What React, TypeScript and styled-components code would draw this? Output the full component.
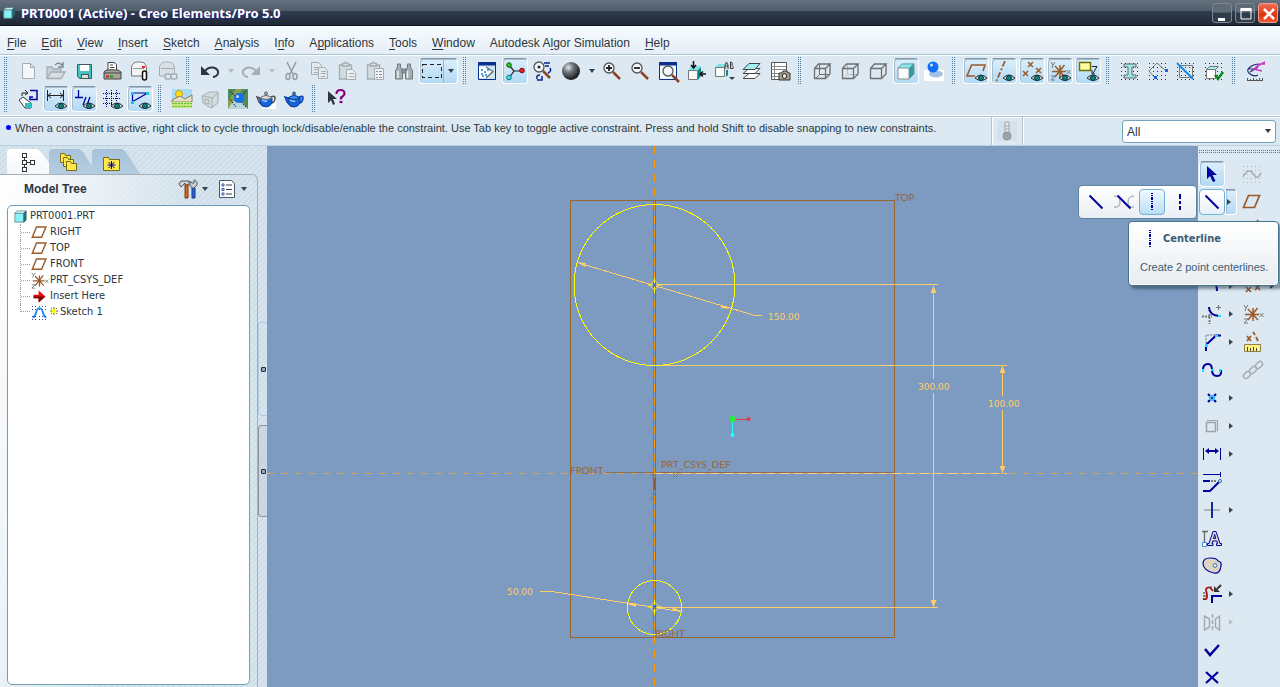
import React from 'react';
import styled, { createGlobalStyle, css } from 'styled-components';

const Global = createGlobalStyle`
  * { box-sizing: border-box; }
  html, body { margin: 0; height: 100%; }
  body { font: 12px "Liberation Sans", sans-serif; color: #2b3640; overflow: hidden; }
  button, select { font: inherit; color: inherit; }
  ul { list-style: none; margin: 0; padding: 0; }
`;

const ui = '"Liberation Sans", Arial, sans-serif';
const treeFont = '"DejaVu Sans Condensed", Tahoma, sans-serif';
const face = '#dce9f2';
const navy = '#00009c';
const brown = '#9a5a2a';
const off = '#a3adb3';

const Shell = styled.div`
  display: flex;
  flex-direction: column;
  height: 100vh;
  background: ${face};
`;

const TitleBar = styled.header`
  display: flex;
  align-items: center;
  flex: none;
  height: 26px;
  padding: 0 2px 0 2px;
  gap: 3px;
  background: linear-gradient(#65717e 0, #4f5c69 11px, #313e4e 11px, #1e2735 25px, #10161f 25px);
`;

const Title = styled.h1`
  flex: 1;
  margin: 0 0 0 2px;
  font: bold 13px/26px "Noto Sans", sans-serif;
  color: #fff;
  text-shadow: 1px 1px 0 #1c2a8c;
`;

const WinButton = styled.button<{ $close?: boolean }>`
  display: grid;
  place-items: center;
  width: 20px;
  height: 20px;
  padding: 0;
  border: 1px solid ${p => (p.$close ? '#f0a08c' : '#7d8893')};
  border-radius: 3px;
  background: ${p => (p.$close ? 'linear-gradient(#ef6f55, #e2320f 60%, #ef5a36)' : 'linear-gradient(#5f6b77 45%, #2f3c4b 50%)')};
`;

const MenuBar = styled.nav`
  display: flex;
  flex: none;
  gap: 15px;
  height: 28px;
  padding: 0 7px;
  line-height: 35px;
  background: linear-gradient(#f6fcff, #e6edf5);
`;

const MenuItem = styled.a`
  color: #2b3640;
  text-decoration: none;
  white-space: nowrap;
  u { text-underline-offset: 2px; }
`;

const Toolbars = styled.div`
  flex: none;
  padding: 2px 0 3px;
  border-top: 1px solid #a9c6d6;
  border-bottom: 1px solid #a9c6d6;
  box-shadow: inset 0 1px #fff, inset 0 -1px #fff, 0 1px #fff;
`;

const ToolRow = styled.div`
  display: flex;
  height: 28px;
`;

const Group = styled.div`
  display: flex;
  flex: none;
`;

const dots = css`
  background-image: conic-gradient(from 90deg at 1px 1px, transparent 180deg, #4f7d9c 180deg 270deg, transparent 270deg);
  background-size: 2px 2px;
`;

const Grip = styled.span`
  flex: none;
  width: 4px;
  height: 28px;
  margin: 0 6px 0 4px;
  ${dots}
`;

const pressedLook = css`
  border-color: #8395a2 #fff #fff #fff;
  background: linear-gradient(#dbeefb, #b3daf5);
  box-shadow: inset 1px 1px 0 #a4bdcf;
`;

const ToolButton = styled.button<{ $on?: boolean }>`
  display: grid;
  place-items: center;
  flex: none;
  width: 26px;
  height: 26px;
  margin: 1px;
  padding: 0;
  border: 1px solid transparent;
  border-radius: 4px;
  background: none;
  ${p => p.$on && pressedLook}
`;

const ArrowButton = styled.button<{ $dim?: boolean; $side?: boolean }>`
  flex: none;
  width: 13px;
  height: 28px;
  padding: 0;
  border: 0;
  background: none;
  &::before {
    content: '';
    display: block;
    margin: 0 auto;
    width: 0;
    border: 3px solid transparent;
    ${p => (p.$side
    ? css`border-left: 4px solid ${p.$dim ? '#b3bdc3' : '#36424c'}; border-right: 0; width: 4px;`
    : css`border-top: 4px solid ${p.$dim ? '#b3bdc3' : '#36424c'}; border-bottom: 0;`)}
  }
`;

const Combo = styled.div`
  display: flex;
  width: 39px;
  height: 26px;
  margin: 1px;
  border: 1px solid;
  border-radius: 4px;
  ${pressedLook}
  > button:first-child { flex: 1; padding: 0 0 0 1px; border: 0; border-right: 1px solid #8fbad6; background: none; display: grid; place-items: center; }
  > button:last-child { height: 24px; }
`;

const Glyph = styled.svg.attrs({ viewBox: '0 0 20 20', width: 20, height: 20, fill: 'none' })`
  display: block;
  overflow: visible;
`;

const MessageBar = styled.div`
  display: flex;
  flex: none;
  height: 29px;
  border-bottom: 1px solid #b9d0de;
`;

const Message = styled.p`
  display: flex;
  flex: 1;
  gap: 4px;
  margin: 0;
  padding: 4px 0 0 6px;
  font: 11px/14px ${ui};
  white-space: nowrap;
  &::before { content: ''; width: 5px; height: 5px; margin-top: 4px; border-radius: 3px; background: #00f; }
`;

const Thermo = styled.div`
  display: grid;
  place-items: center;
  width: 32px;
  margin-right: 99px;
  border: solid #b4c3cd;
  border-width: 0 1px;
  box-shadow: inset 1px 0 #fff, 1px 0 #fff;
`;

const FilterWrap = styled.label`
  position: relative;
  width: 154px;
  margin: 3px 4px 0 0;
  &::after {
    content: '';
    position: absolute;
    right: 5px;
    top: 9px;
    border: 3px solid transparent;
    border-top: 4px solid #2b3640;
    border-bottom: 0;
    pointer-events: none;
  }
`;

const Filter = styled.select`
  appearance: none;
  width: 100%;
  height: 23px;
  padding: 0 4px;
  border: 1px solid #73a3bb;
  border-radius: 3px;
  background: #fff;
`;

const Main = styled.main`
  display: flex;
  flex: 1;
  min-height: 0;
`;

const LeftPane = styled.aside`
  display: flex;
  flex: none;
  width: 267px;
  background: repeating-linear-gradient(135deg, #cfdfea 0 2px, #d8e5ee 2px 4px);
`;

const Navigator = styled.div`
  display: flex;
  flex-direction: column;
  width: 258px;
`;

const Tabs = styled.div`
  display: flex;
  height: 28px;
  padding: 3px 0 0 7px;
`;

const Tab = styled.button<{ $active?: boolean }>`
  width: ${p => (p.$active ? 50 : 48)}px;
  height: 25px;
  margin-right: ${p => (p.$active ? -8 : -5)}px;
  padding: 0 0 0 8px;
  border: 0;
  border-radius: 4px 0 0 0;
  background: ${p => (p.$active ? 'linear-gradient(#fff, #f3f7fa)' : 'linear-gradient(#a6c2da, #b4cde0)')};
  clip-path: polygon(0 0, 30px 0, 34px 3px, 100% 100%, 0 100%);
`;

const Sheet = styled.section`
  display: flex;
  flex-direction: column;
  flex: 1;
  min-height: 0;
  padding: 0 7px 2px;
  border: solid #a3b0b9;
  border-width: 1px 1px 0 0;
  border-radius: 0 6px 0 0;
  background: linear-gradient(100deg, #fff 0, #f2f6f9 60px, transparent 190px);
`;

const SheetHead = styled.div`
  display: flex;
  align-items: center;
  height: 30px;
  padding: 0 0 2px 17px;
  h2 { flex: 1; margin: 0; font: bold 12px/16px ${ui}; }
`;

const Tree = styled.ul`
  && { padding: 2px 5px; }
  flex: 1;
  width: 243px;
  border: 1px solid #6f9fb8;
  border-radius: 5px;
  background: #fff;
  font: 11px/16px ${treeFont};
`;

const TreeItem = styled.li<{ $child?: boolean; $last?: boolean }>`
  display: flex;
  align-items: center;
  gap: 2px;
  height: 16px;
  ${p => p.$child && css`
    margin-left: 7px;
    &::before {
      content: '';
      width: 10px;
      height: ${p.$last ? 8 : 16}px;
      align-self: flex-start;
      border-left: 1px dotted #9aa4ab;
      background: repeating-linear-gradient(90deg, #9aa4ab 0 1px, #fff 1px 2px) 0 ${p.$last ? '100%' : '8px'} / 100% 1px no-repeat;
    }
    gap: 0;
    svg { margin: 0 2px 0 0; }
  `}
`;

const Sash = styled.div`
  display: flex;
  flex-direction: column;
  gap: 9px;
  width: 9px;
  padding-top: 176px;
`;

const SashHandle = styled.button<{ $dark?: boolean }>`
  display: grid;
  place-items: center;
  height: ${p => (p.$dark ? 92 : 94)}px;
  padding: 0;
  border: 1px solid ${p => (p.$dark ? '#8b969e' : '#a9cbe4')};
  border-right: 0;
  border-radius: 4px 0 0 4px;
  background: ${p => (p.$dark ? 'rgba(190,205,214,.5)' : 'none')};
  &::before { content: ''; width: 3px; height: 3px; border: 1px solid #1e2a33; border-radius: 1px; background: #9ab; }
`;

const Viewport = styled.div`
  flex: 1;
  min-width: 0;
  background: #7d9bc0;
  svg { display: block; width: 100%; height: 100%; }
`;

const RightPane = styled.aside`
  position: relative;
  flex: none;
  width: 82px;
  padding-top: 4px;
`;

const SideGrip = styled.div`
  height: 4px;
  margin: 0 0 6px 1px;
  ${dots}
`;

const SideRow = styled.div`
  display: flex;
  height: 28px;
`;

const Cell = styled.div<{ $w: number }>`
  flex: none;
  width: ${p => p.$w}px;
`;

const SplitArrow = styled.div`
  width: 12px;
  height: 26px;
  margin: 1px 0 1px -1px;
  border: 1px solid;
  border-radius: 0 4px 4px 0;
  ${pressedLook}
  button { width: 10px; height: 24px; }
`;

const Flyout = styled.div`
  position: absolute;
  top: 39px;
  right: 83px;
  display: flex;
  padding: 2px 2px 2px 3px;
  border: 1px solid #5c87a3;
  border-radius: 4px;
  background: linear-gradient(#fff, #e9eff3);
`;

const FlyButton = styled(ToolButton)<{ $plain?: boolean }>`
  ${p => p.$on && css`
    border-color: #6fb2d9;
    box-shadow: none;
    background: ${p.$plain ? 'linear-gradient(#fff, #e8f1f8)' : 'linear-gradient(#f2faff, #b9def6)'};
  `}
`;

const Tip = styled.div`
  position: absolute;
  top: 75px;
  right: 1px;
  width: 151px;
  padding: 7px 11px 10px;
  border: 1px solid #44738c;
  border-radius: 4px;
  background: linear-gradient(#fff, #e8edf1);
  box-shadow: inset 0 0 0 1px #fff, 3px 3px 3px rgba(30, 50, 70, .5);
  color: #3a5d74;
  h3 { display: flex; align-items: center; gap: 3px; margin: 0 0 10px; height: 20px; font: bold 11px/20px "DejaVu Sans Condensed", sans-serif; }
  p { margin: 0; font: 11px/16px ${ui}; white-space: nowrap; }
`;

const Eye = () => (
  <g>
    <path d="M9 17q6-6 12 0q-6 5-12 0z" fill="#c9d6d8" stroke="#28343a" />
    <circle cx="15" cy="17" r="2.5" fill="#0a8583" stroke="#153238" />
  </g>
);
const Grid = ({ c = '#10269c' }: { c?: string }) => (
  <path d="M1.5 2V19M5.5 2V19M9.5 2V19M13.5 2V19M17.5 2V19" stroke={c} strokeDasharray="1 3" shapeRendering="crispEdges" />
);
const Cube = ({ full, back }: { full?: boolean; back?: string }) => (
  <g stroke="#6f6f6f" shapeRendering="auto">
    {full && <path d="M3.500 17.500l4-4M7.500 3.500v10h10.500" stroke={back} />}
    <path d="M2.500 7.500h11v10h-11zM2.500 7.500l4-4.500h11.500l-4.500 4.500M18 3v10l-4.500 4.500" strokeWidth="1.300" />
  </g>
);
const Tea = ({ half }: { half?: boolean }) => (
  <g>
    {half && <path d="M6 10h14v10H6z" fill="#fff" />}
    <path d="M4 9L1 8l2 5 3 3zM15 8q5-2 4 2t-4 4" stroke={half ? '#555' : '#1247b8'} fill={half ? 'none' : '#4b9cf0'} strokeWidth="1.500" />
    <path d="M4 9q7-4 12 0v5q-2 4-6 4t-6-4z" fill="#1464d8" stroke="#0b3a9c" />
    <path d="M4 9q6-5 12 0q-6 3-12 0z" fill={half ? '#ddd' : '#3f8ef0'} stroke={half ? '#777' : '#0b3a9c'} />
    <circle cx="10" cy="4.500" r="1.500" fill={half ? '#bbb' : '#2678e0'} stroke="#456" />
    <path d="M6 11q3 2 5 1" stroke="#a9d4ff" strokeWidth="1.500" />
  </g>
);
const Lens = ({ x = 8, y = 7 }: { x?: number; y?: number }) => (
  <g>
    <path d={`M${x + 4} ${y + 4}l7 7`} stroke="#8a4526" strokeWidth="2.500" />
    <circle cx={x} cy={y} r="5" fill="#f2f7fa" stroke="#555" strokeWidth="1.300" />
  </g>
);
const Folder = ({ x, y }: { x: number; y: number }) => (
  <path d={`M${x} ${y}v-2h4l1 2h5v7h-10z`} fill="#ffe94a" stroke="#7a6a1c" />
);
const Plane = <path d="M1.500 15.500h11l5-12h-11z" stroke={brown} strokeWidth="1.700" />;
const Csys = (
  <g>
    <path d="M10 4v13M2 10.500h14M5 5l10 11M14.500 4L5 16" stroke={brown} strokeWidth="1.500" />
    <path d="M1 1l2 3 2-3M3 4l-1 3M1 15h4l-4 4h4M16.500 9l4 4m0-4l-4 4" stroke="#70787c" />
  </g>
);
const Link = (c: string) => (
  <g stroke={c} strokeWidth="1.500">
    <rect x="0" y="12.500" width="8" height="5" rx="2.500" transform="rotate(-45 4 15)" />
    <rect x="6" y="7.500" width="8" height="5" rx="2.500" transform="rotate(-45 10 10)" />
    <rect x="12" y="2.500" width="8" height="5" rx="2.500" transform="rotate(-45 16 5)" />
  </g>
);
const Clip = (
  <g stroke={off} strokeWidth="1.300">
    <path d="M1.500 4h12v14h-12z" fill="#d3dce1" />
    <path d="M4.500 5V2.500h2l1-1.500 1 1.500h2V5z" fill="#e6ecef" />
  </g>
);

const icons: Record<string, React.ReactNode> = {
  fresh: <path d="M4.500 2.500h8l4 4v11h-12zM12.500 2.500v4h4" fill="#f4f7fa" stroke={off} />,
  open: <g stroke={off} strokeWidth="1.300"><path d="M1 17V6h5l1 2h8v3" fill="#c9d2d7" /><path d="M1 17.500L5 11h14l-4 6.500z" fill="#d5dde2" /><path d="M9 4q4-4 8 1M17 1v5h-5" stroke="#7c868c" /></g>,
  save: <g><path d="M3.500 3.500h14v14h-12l-2-2z" fill="#45c3c3" stroke="#3c5b5e" /><path d="M6 4h9v6H6z" fill="#fff" /><path d="M7.500 13.500h7v4h-7z" fill="#ddd" stroke="#3c5b5e" /></g>,
  print: <g stroke="#444"><path d="M6 10V1.500h6l2.500 2V10z" fill="#fff" /><path d="M8 4h3M8 6.500h4.500M8 9h4" /><path d="M2 11l2-2h12l3 2v7H2z" fill="#a9a49a" /><path d="M2 12h17" /><path d="M4 15.500h3" stroke="#b22" strokeWidth="2" /><path d="M8 15.500h3" stroke="#191" strokeWidth="2" /></g>,
  mail: <g><path d="M1.500 15V6q1-5 6-5h3q6 0 6 7v7z" fill="#f4f4f2" stroke="#777" /><path d="M3 7.500h11" stroke="#999" /><path d="M12 6h3" stroke="#d22" strokeWidth="2" /><rect x="12.500" y="10" width="4" height="9" rx="2" fill="#fff" stroke="#111" strokeWidth="1.500" /></g>,
  maillink: <g stroke={off}><path d="M1.500 15V6q1-5 6-5h3q6 0 6 7v7z" fill="#d9e1e6" /><path d="M3 7.500h13" /><rect x="7" y="13" width="6" height="5" rx="2" fill={face} strokeWidth="1.500" /><rect x="13" y="13" width="6" height="5" rx="2" fill={face} strokeWidth="1.500" /></g>,
  undo: <g><path d="M5 10q3-4 8-3.500q6 1.500 5 6q-1 3-5 3.500" stroke="#2a3540" strokeWidth="2" /><path d="M1 5v9h9z" fill="#2a3540" /></g>,
  redo: <g><path d="M15 10q-3-4-8-3.500q-6 1.500-5 6q1 3 5 3.500" stroke={off} strokeWidth="2" /><path d="M19 5v9h-9z" fill={off} /></g>,
  cut: <g stroke="#929ba1" strokeWidth="1.500"><path d="M5 1l6 12M14 1L8 13" /><ellipse cx="6" cy="15.500" rx="2" ry="3" /><ellipse cx="13" cy="15.500" rx="2" ry="3" /></g>,
  copy: <g stroke={off} fill="#e3eaee"><path d="M1.500 1.500h7l3 3v9h-10zM4 6.500h6M4 8.500h6M4 11.500h5" /><path d="M8.500 6.500h6l3 3v8h-9zM11 10.500h5M11 12.500h5M11 15.500h4" /></g>,
  paste: <g>{Clip}<path d="M8.500 8.500h6l3 3v7h-9zM11 12.500h5M11 15.500h5" fill="#e9eef1" stroke={off} /></g>,
  pastesp: <g>{Clip}<path d="M8.500 7.500h9v11h-9z" fill="#eef2f5" stroke={off} /><path d="M10 10.500h2M13 10.500h3M10 13.500h2M13 13.500h3M10 16.500h2M13 16.500h3" stroke="#8b959b" /></g>,
  find: <g stroke="#70797e"><path d="M3.500 3h3v3l2 4v8h-7v-8l2-4zM13.500 3h3v3l2 4v8h-7v-8l2-4z" fill="#a7afb3" /><path d="M8 8h4v4H8z" fill="#8c9599" /><path d="M4 10v7M13.500 10v7" stroke="#edf1f3" strokeWidth="1.500" /></g>,
  marquee: <rect x="0.500" y="3.500" width="19" height="13" stroke="#222" strokeDasharray="4 3" shapeRendering="crispEdges" />,
  repaint: <g><path d="M1.500 1.500h17v17h-17z" fill="#cfe6f7" stroke="#0a2f8c" /><path d="M1 3h18" stroke="#0a2f8c" strokeWidth="3" /><path d="M10 6l7 4.500L10 17H2V6z" fill="#fff" /><path d="M9 6l7 4.500L9 17" stroke="#666" strokeWidth="1.300" /><path d="M4 9h2M7 11h2M4 13h2M8 14h2M5 15h2M10 9h2" stroke="#1583dd" strokeWidth="1.500" /></g>,
  orient: <g><path d="M4 4l5 6-5 7M9 10h7" stroke="#222" strokeWidth="1.200" /><circle cx="4" cy="4" r="2.300" fill="#2bd023" stroke="#0a5a0a" /><circle cx="17" cy="9.500" r="2.300" fill="#f02020" stroke="#700" /><circle cx="4" cy="16.500" r="2.300" fill="#3fe0e0" stroke="#077" /></g>,
  mode: <g><Lens x={6} y={6} /><circle cx="6" cy="6" r="1.500" fill="#222" /><path d="M11 2h6M12 5h4M17 7q2 3-2 5M4 18q-1-4 3-4M4 19h5v-4" stroke="#0a1f98" strokeWidth="1.500" /></g>,
  sphere: <circle cx="10" cy="10" r="9" fill="url(#ball)" />,
  zoomin: <g><Lens x={7} y={7} /><path d="M4 7h6M7 4v6" stroke="#222" strokeWidth="1.800" /></g>,
  zoomout: <g><Lens x={7} y={7} /><path d="M4 7h6" stroke="#222" strokeWidth="1.800" /></g>,
  refit: <g><path d="M1.500 1.500h17v17h-17z" fill="#f4f9fc" stroke="#0a2f8c" /><path d="M1 3h18" stroke="#0a2f8c" strokeWidth="3" /><Lens x={10} y={10} /></g>,
  reorient: <g><path d="M2.500 9.500h9v9h-9z" fill="#fafcfc" stroke="#777" /><path d="M2 9l4-4h9l-3 4z" fill="#7be5e5" /><path d="M12 9l3-3v9l-3 4z" fill="#0e8a8a" /><path d="M7.500 0v6M5 4l2.500 3L10 4M20 13h-5M17 10.500L14 13l3 2.500" stroke="#111" strokeWidth="1.500" /></g>,
  saved: <g><path d="M1.500 6.500h9v9h-9z" fill="#fafcfc" stroke="#777" /><path d="M1 6l3-3h7l-1 3z" fill="#7be5e5" /><path d="M12 9h2v5l-2 2z" fill="#0e8a8a" /><path d="M11 8V4l1.500-3L14 4v4M11 5h3M16.500 1v6.500h2.500q1-2-1-3q1-2-.5-3.500z" stroke="#333" /><path d="M15 16h6l-3 3z" fill="#36424c" /></g>,
  layers: <g stroke="#444"><path d="M1 17.500h12l5-5H7z" fill="#fff" /><path d="M1 12.500h12l5-5H7z" fill="#fff" /><path d="M1 8.500h12l5-6H7z" fill="#9ff0f2" /></g>,
  viewmgr: <g><path d="M1.500 1.500h15v17h-15z" fill="#fff" stroke="#555" /><path d="M2 5.500h14M2 8.500h14M2 12.500h14M2 15.500h14M4.500 2v16" stroke="#888" /><path d="M9 12h3l1-2h4l1 2h2v7H9z" fill="#a9a488" stroke="#333" /><circle cx="14.500" cy="15" r="2.300" fill="#eee" stroke="#222" /></g>,
  wire: <Cube full back="#6f6f6f" />,
  hidden: <Cube full back="#b9bfc2" />,
  nohidden: <Cube />,
  shaded: <g><path d="M2 7h11v11H2z" fill="#f8fdfd" /><path d="M2 7l5-5h11l-5 5z" fill="#7df0f0" /><path d="M13 7l5-5v11l-5 5z" fill="#2b9ea0" /><path d="M2 7h11v11H2zM2 7l4-4h12v10l-5 5" stroke="#8a8f90" /></g>,
  realism: <g><path d="M0 9h20v11H0z" fill="#fff" /><ellipse cx="12" cy="13" rx="7" ry="3.500" fill="#a3c1e0" /><circle cx="9" cy="6" r="5.500" fill="#0f6ff0" /><circle cx="7.500" cy="4" r="1.500" fill="#cfe6ff" /></g>,
  dplane: <g><path d="M10 18H2L6.500 7H20l-2 6" stroke={brown} strokeWidth="1.600" transform="translate(-1 -3)" /><Eye /></g>,
  daxis: <g><path d="M11 0L2 21" stroke={brown} strokeWidth="1.800" strokeDasharray="6 2 2 2" /><Eye /></g>,
  dpoint: <g><path d="M6 1l5 5m0-5L6 6M1 10l5 5m0-5l-5 5M14 7l5 5m0-5l-5 5" stroke={brown} strokeWidth="1.500" /><Eye /></g>,
  dcsys: <g>{Csys}<Eye /></g>,
  dnote: <g><path d="M1.500 1.500h11v8h-11z" fill="#fdfda0" stroke="#6b6b10" strokeWidth="1.500" /><path d="M14 5.500h5l-4 7M14 9v4h3" stroke="#222" /><Eye /></g>,
  beam: <g><Grid /><path d="M4 3h12v3h-4v8h4v3H4v-3h4V6H4z" fill="#9ee8ee" stroke="#666" /></g>,
  shell: <g><Grid /><path d="M9 2L1 10l6 7M9 2l9 8" stroke="#777" /><path d="M6 15h3v3H6zM17 8h3v3h-3z" fill="#1566e0" /></g>,
  cutg: <g><Grid /><path d="M3.500 4.500h13v12h-13z" stroke="#777" /><path d="M1 2l16 16" stroke="#1583f0" strokeWidth="2" /></g>,
  okbox: <g><Grid /><path d="M2.500 8.500h9v9h-9z" fill="#fff" stroke="#777" /><path d="M2.500 8.500l3-3h9l-3 3z" fill="#9ff0f0" stroke="#777" /><path d="M11 14l3 4 5-7" stroke="#0a8a1a" strokeWidth="2.500" /></g>,
  measure: <g><path d="M1.500 20v-3M4.500 20v-2M7.500 20v-3M10.500 20v-2M13.500 20v-3M16.500 20v-3M1 19.500h16" stroke="#555" /><path d="M14 3q-7 0-11 4-3 3 1 6 4 3 8 1M3 8h7M4 11l8-5" stroke="#1f2b6b" strokeWidth="1.200" /><path d="M19 1q-7 3-11 7l8 2M15 3h4" stroke="#d235c8" strokeWidth="1.500" /></g>,
  orientsk: <g><path d="M12 1.500h7v9h-7V8h3" stroke={navy} strokeWidth="1.500" /><path d="M4 7V4h5M7 1l3 3-3 2" stroke="#222" /><path d="M1 11l4-3 8 6v5H7z" fill="#fff" stroke="#333" /><path d="M7 14h6v5H7z" fill="#2fc0c0" /></g>,
  dim: <g><path d="M1.500 1v11M17.500 1v11M2 6.500h15M5 4L2 6.500 5 9M14 4l3 2.500L14 9" stroke="#222" /><Eye /></g>,
  constr: <g><path d="M4.500 1v8M1 8.500h8M9 16l3-8M13 16l3-8" stroke={navy} strokeWidth="1.300" /><Eye /></g>,
  grid: <g><path d="M4.500 1v18M9.500 1v18M14.500 1v12M1 4.500h18M1 9.500h18M1 14.500h10" stroke={navy} strokeDasharray="1 1" shapeRendering="crispEdges" /><Eye /></g>,
  vertex: <g><path d="M2.500 13V4h15L2 13" stroke={navy} strokeWidth="1.200" /><path d="M1 3h3v3H1zM16 3h3v3h-3zM1 12h3v3H1z" fill="#1fc4e0" /><Eye /></g>,
  scene: <g><path d="M0 0h20v11H0z" fill="#a8dcf5" /><circle cx="7" cy="5" r="3.500" fill="#ffdf20" stroke="#c99c10" /><path d="M0 11l8-4 5 3 7-4v7H0z" fill="#e9dfc6" stroke="#8a7a5a" /><path d="M0 13h20v6H0z" fill="#c5e87c" /><path d="M0 14.500h20M0 17.500h20" stroke="#5cba3c" strokeDasharray="2 1" /></g>,
  perspective: <g stroke={off} fill="#d3dbdf"><path d="M2 7l7-4h9v11l-7 5-8-5z" /><path d="M3 7l9 2v10M12 9l6-5M5 10l4 1v4l-4-1z" /></g>,
  map: <g><path d="M0 0h20v20H0z" fill="#4b8b5c" /><path d="M0 12L8 0h6L4 20H0z" fill="#8aa04c" /><path d="M0 20l5-8 9 1 6 7z" fill="#b8d4dd" /><path d="M2 2l16 16M18 2L8 14M2 10l6 8" stroke="#123" strokeDasharray="2 1" /><circle cx="11" cy="9" r="5" fill="#1270f0" /><circle cx="9.500" cy="7.500" r="1.500" fill="#bfe0ff" /></g>,
  teahalf: <Tea half />,
  tea: <Tea />,
  help: <g><path d="M2 2v12l3-3 2 5 2-1-2-5h4z" fill="#2a3540" /><path d="M10.500 5q0-4 4-4t4 3.500q0 2-3.500 4v2" stroke="#84007e" strokeWidth="2.200" /><path d="M13.500 13h3" stroke="#84007e" strokeWidth="2.200" /></g>,
  thermo: <g><path d="M0 0h20v20H0z" fill="#d4e1ea" /><path d="M8 1h4v11H8z" fill="#e5ebee" stroke="#9fa8ad" /><path d="M8 5h4M8 8h4" stroke="#9fa8ad" /><circle cx="10" cy="15" r="4" fill="#9aa3a7" stroke="#8a9398" /></g>,
  tabTree: <g stroke="#333"><path d="M7.500 1.500h4v4h-4zM7.500 8.500h4v4h-4zM15.500 8.500h4v4h-4zM7.500 15.500h4v4h-4zM9.500 5.500v3M11.500 10.500h4M9.500 12.500v3" shapeRendering="crispEdges" /></g>,
  tabFolders: <g><Folder x={3.5} y={3.5} /><Folder x={6.5} y={7.5} /><Folder x={9.5} y={11.5} /></g>,
  tabFav: <g><path d="M3.500 18.500v-13h5l1 2h10v11z" fill="#ffe94a" stroke="#7a6a1c" /><path d="M11.500 9v8M7.500 13h8M8.500 10l6 6M14.500 10l-6 6" stroke={navy} /></g>,
  tools: <g><path d="M1 5l2-3h8v4H7V4L3 8z" fill="#d0d6d9" stroke="#555" /><path d="M7 6h3v13H7z" fill="#d2691e" stroke="#7a3a10" /><path d="M14 9h3v10h-3z" fill="#2a5fd8" stroke="#123a90" /><path d="M12 2l2 2h2V1q4 1 3 5l-3 3h-2q-3-2-2-7z" fill="#c9cfd2" stroke="#555" /></g>,
  list: <g><path d="M2.500 1.500h12l3 3v14h-15z" fill="#fafcfd" stroke="#4b5a68" /><path d="M9 6h6M9 10.500h6M9 15h6" stroke="#444" /><path d="M5 5h2v2H5zM5 9.500h2v2H5zM5 14h2v2H5z" stroke="#3560b0" /></g>,
  part: <g><path d="M2.500 5.500h12v12h-12z" fill="#8af2f4" stroke="#4e8286" /><path d="M2.500 5.500l3-3h12l-3 3z" fill="#e4fdfd" stroke="#4e8286" /><path d="M14.500 5.500l3-3v12l-3 3z" fill="#0f7e84" stroke="#2a5e62" /></g>,
  plane: Plane,
  csys: Csys,
  insert: <g><path d="M3 8h6V3l8 7-8 7v-5H3z" fill="#e80c0c" /><path d="M3 10h14l-8 7v-5H3z" fill="#7a0606" /></g>,
  sketch: <g><Grid /><path d="M2 16q3-1 4-6 1-5 4-5t4 5q1 5 4 6" stroke="#1583f0" strokeWidth="2" /></g>,
  arrow: <path d="M5 2v13l3-3 3 6 2.500-1-3-6h4.500z" fill={navy} />,
  graphWave: <g><Grid c="#a8b2b8" /><path d="M1 13q3-6 6-6t5 4 5 1l2-3" stroke={off} strokeWidth="1.500" /></g>,
  line: <path d="M3.500 3.500l13 13" stroke={navy} strokeWidth="2" />,
  tangent: <g><path d="M0 4q6 0 6 6t-6 5M20 4q-6 0-6 6t6 5" stroke="#8f999f" /><path d="M3.500 3.500l13 13" stroke={navy} strokeWidth="2" /></g>,
  centre: <path d="M10 1v18" stroke={navy} strokeWidth="2" strokeDasharray="1 1 1 1 3 1" shapeRendering="crispEdges" />,
  geocentre: <path d="M10 2v16" stroke={navy} strokeWidth="2" strokeDasharray="5 2 3 2" />,
  rect: <path d="M3 5h14v11H3z" stroke={navy} strokeWidth="2" />,
  circle: <circle cx="10" cy="10" r="7" stroke={navy} strokeWidth="2" />,
  arc: <path d="M3 3q12 0 12 12" stroke={navy} strokeWidth="2" />,
  axis: <path d="M15 0L5 18" stroke={brown} strokeWidth="2" strokeDasharray="6 2 2 2" />,
  curve: <path d="M2 15q4-12 8-5t8-6" stroke={brown} strokeWidth="2" />,
  points: <path d="M9 1l4 4m0-4l-4 4M3 11l5 5m0-5l-5 5M12 9l5 5m0-5l-5 5" stroke={brown} strokeWidth="1.600" />,
  fillet: <g><path d="M0 12.500h10M7.500 10v10" stroke="#777" strokeWidth="1.800" strokeDasharray="2 1" /><path d="M7 3q0 8 10 9" stroke={navy} strokeWidth="2" /><path d="M16 11h3v2h-3z" fill="#1fe0f0" /><path d="M16.500 1v5M14 3.500h5" stroke="#777" /></g>,
  chamfer: <g><path d="M4 11V3h9" stroke="#777" strokeDasharray="2 1" /><path d="M4 19v-6L14 3.500h5" stroke={navy} strokeWidth="2" /><path d="M3 12h3v3H3zM13 3h3v2h-3z" fill="#1fe0f0" /></g>,
  spline: <g><path d="M1 10q0-6 5-6 4 0 4 6t5 6 4-6" stroke={navy} strokeWidth="2" /><path d="M0 9h2v3H0zM9 9h3v2H9zM17 9h2v3h-2z" fill="#1fe0f0" /></g>,
  point: <g><path d="M6 6l8 8M14 6l-8 8" stroke={navy} strokeWidth="2.200" /><path d="M8 7h4v1h1v4h-1v1H8v-1H7V8h1z" fill="#4ab4f5" /><path d="M9 9h2v2H9z" fill="#0a4fb0" /></g>,
  offset: <g stroke="#9ca4a8"><path d="M4.500 6.500h9v9h-9z" strokeWidth="1.500" /><path d="M5 4.500h10.500V15" /></g>,
  dimension: <g stroke={navy}><path d="M1.500 4v12M18.500 4v12" /><path d="M4 7h12" strokeWidth="2" /><path d="M7 4L3 7l4 3zM13 4l4 3-4 3z" fill={navy} stroke="none" /></g>,
  modify: <g stroke={navy}><path d="M1 2.500h17M18.500 0v5" /><path d="M1 9h7M1 19h7l9-9" strokeWidth="2" /><path d="M9 9h6" stroke="#777" strokeWidth="2" strokeDasharray="2 1" /><circle cx="18" cy="9" r="1.500" fill="#fff" stroke="#0a6fb0" /></g>,
  constraint: <g><path d="M2 10h16" stroke="#b0b4b5" strokeWidth="2" /><path d="M10 2v16" stroke="#0a2f9c" strokeWidth="2" /></g>,
  text: <g><path d="M0 3.500h6M2.500 4v11" stroke="#666" strokeWidth="1.300" /><path d="M0.500 14.500h4v4h-4z" stroke="#3a8fd0" fill="#fff" /><path d="M5.500 17.500v-2h1.500l4-12h3l4 12h1.500v2h-5v-2h1l-.7-2.500h-4l-.8 2.500h1v2zM11.500 10.500h2.200l-1-4z" fill="#ddd8c8" stroke={navy} /></g>,
  palette: <g><path d="M1 8q0-6 7-6 7 0 8 3 4 1 3 5-1 8-7 7Q2 15 1 8z" fill="#ddd5c2" stroke={navy} strokeWidth="1.200" /><circle cx="13" cy="9.500" r="1.800" fill="#fff" stroke="#2a6fb0" /></g>,
  trim: <g><path d="M1 12h3M9 5V2M1 9h2" stroke="#888" strokeWidth="2" /><path d="M1 15q5 1 4-4t-1-6q3-4 7 2" stroke="#a8140c" strokeWidth="1.800" /><path d="M10 19v-7h10" stroke={navy} strokeWidth="2" /><path d="M19 1l-4 4" stroke="#333" strokeWidth="2" /><path d="M12 8V2l6 6z" fill="#333" /></g>,
  mirror: <g stroke={off} strokeWidth="1.500"><path d="M2.500 4l5 3v8l-5 3zM17.500 4l-4 3v8l4 3z" /><path d="M10.500 2v17" strokeDasharray="4 2" /></g>,
  check: <path d="M3 9l5 6L17 5" stroke={navy} strokeWidth="2.500" />,
  cross: <path d="M4 4l12 11M16 4L4 15" stroke={navy} strokeWidth="2.200" />,
  ruler: <g><path d="M4 4l4 5m0-5L4 9M10 0l2 3M13 5l2 4" stroke={brown} strokeWidth="1.800" /><path d="M1.500 12.500h16v7h-16z" fill="#fff27a" stroke="#8a8050" /><path d="M4.500 19v-4M7.500 19v-3M10.500 19v-4M13.500 19v-3" stroke="#444" /></g>,
  chain: Link(off),
};

const Icon = ({ name, size = 20 }: { name: string; size?: number }) => (
  <Glyph width={size} height={size} style={{ width: size, height: size }} aria-hidden>{icons[name]}</Glyph>
);

type Tool = { i: string; label: string; on?: boolean; menu?: 'dim' | 'dark'; combo?: boolean };
const t = (i: string, label: string, extra: Partial<Tool> = {}): Tool => ({ i, label, ...extra });
const on = { on: true };

const rows: Tool[][][] = [
  [
    [t('fresh', 'New'), t('open', 'Open'), t('save', 'Save'), t('print', 'Print'), t('mail', 'Send as attachment'), t('maillink', 'Send as link')],
    [t('undo', 'Undo', { menu: 'dim' }), t('redo', 'Redo', { menu: 'dim' }), t('cut', 'Cut'), t('copy', 'Copy'), t('paste', 'Paste'), t('pastesp', 'Paste special'), t('find', 'Find'), t('marquee', 'Select inside box', { combo: true })],
    [t('repaint', 'Repaint'), t('orient', 'Spin centre', on), t('mode', 'Orient mode'), t('sphere', 'Appearance gallery', { menu: 'dark' }), t('zoomin', 'Zoom in'), t('zoomout', 'Zoom out'), t('refit', 'Refit'), t('reorient', 'Reorient'), t('saved', 'Saved views'), t('layers', 'Layers'), t('viewmgr', 'View manager')],
    [t('wire', 'Wireframe'), t('hidden', 'Hidden line'), t('nohidden', 'No hidden'), t('shaded', 'Shading', on), t('realism', 'Enhanced realism')],
    [t('dplane', 'Plane display', on), t('daxis', 'Axis display', on), t('dpoint', 'Point display', on), t('dcsys', 'Csys display', on), t('dnote', 'Annotation display', on)],
    [t('beam', 'Beam'), t('shell', 'Open ends'), t('cutg', 'Overlap'), t('okbox', 'Feature requirements')],
    [t('measure', 'Inspect')],
  ],
  [
    [t('orientsk', 'Orient sketch'), t('dim', 'Show dimensions', on), t('constr', 'Show constraints', on), t('grid', 'Show grid'), t('vertex', 'Show vertices', on)],
    [t('scene', 'Scene'), t('perspective', 'Perspective'), t('map', 'Room'), t('teahalf', 'Render region'), t('tea', 'Render')],
    [t('help', 'Context help')],
  ],
];

type Side = { a: string; menu?: 'dim' | 'dark'; b?: string; bMenu?: boolean };
const side: Side[] = [
  { a: 'rect', menu: 'dark', b: 'axis' },
  { a: 'circle', menu: 'dark', b: 'curve' },
  { a: 'arc', menu: 'dark', b: 'points', bMenu: true },
  { a: 'fillet', menu: 'dark', b: 'csys' },
  { a: 'chamfer', menu: 'dark', b: 'ruler' },
  { a: 'spline', b: 'chain' },
  { a: 'point', menu: 'dark' },
  { a: 'offset', menu: 'dark' },
  { a: 'dimension', menu: 'dark' },
  { a: 'modify' },
  { a: 'constraint', menu: 'dark' },
  { a: 'text' },
  { a: 'palette' },
  { a: 'trim', menu: 'dark' },
  { a: 'mirror', menu: 'dim' },
  { a: 'check' },
  { a: 'cross' },
];

const menus: [string, string, string][] = [
  ['', 'F', 'ile'], ['', 'E', 'dit'], ['', 'V', 'iew'], ['', 'I', 'nsert'], ['', 'S', 'ketch'], ['', 'A', 'nalysis'],
  ['I', 'n', 'fo'], ['A', 'p', 'plications'], ['', 'T', 'ools'], ['', 'W', 'indow'], ['Autodesk A', 'l', 'gor Simulation'], ['', 'H', 'elp'],
];

const treeItems: [string, string][] = [
  ['plane', 'RIGHT'], ['plane', 'TOP'], ['plane', 'FRONT'], ['csys', 'PRT_CSYS_DEF'], ['insert', 'Insert Here'], ['sketch', 'Sketch 1'],
];

const ToolItem = ({ tool }: { tool: Tool }) => {
  if (tool.combo) {
    return (
      <Combo>
        <button aria-label={tool.label}><Icon name={tool.i} /></button>
        <ArrowButton aria-label={`${tool.label} options`} />
      </Combo>
    );
  }
  return (
    <>
      <ToolButton $on={tool.on} aria-label={tool.label} aria-pressed={tool.on}><Icon name={tool.i} /></ToolButton>
      {tool.menu && <ArrowButton $dim={tool.menu === 'dim'} aria-label={`${tool.label} options`} />}
    </>
  );
};

const Marker = ({ y }: { y: number }) => (
  <g>
    <path d={`M654.500 ${y - 5}l5 5-5 5-5-5z`} stroke="#ffcc66" />
    <path d={`M654.500 ${y - 7}v5M654.500 ${y + 2}v6M648 ${y}h4M657 ${y}h5`} stroke="#ffff00" />
    <circle cx="654.500" cy={y} r="1.500" fill="#2a6fd8" />
  </g>
);

const Drawing = () => (
  <svg viewBox="267 146 931 541" fill="none" role="img" aria-label="Sketch">
    <g shapeRendering="crispEdges">
      <path d="M570.500 200.500h324v437h-324z" stroke="#996633" />
      <path d="M653.500 201v436" stroke="#777b85" />
      <path d="M655.500 201v436" stroke="#8a6a50" />
      <path d="M606 472.500h289" stroke="#85705f" />
      <path d="M267 473.500h387" stroke="#e0a050" strokeDasharray="7 7" />
      <path d="M654 473.500h353" stroke="#c7ae84" />
      <path d="M654 473.500h353" stroke="#ffcc80" strokeDasharray="9 5" />
      <path d="M1009 473.500h189" stroke="#e0a050" strokeDasharray="7 7" />
      <path d="M654.500 146v541" stroke="#ff9a00" strokeDasharray="8 6" />
      <path d="M654 284.500h284M654 365.500h353M654 607.500h284M933.500 286v93M933.500 393v214M1002.500 366v30M1002.500 410v63" stroke="#ffcc66" />
      <path d="M577 262.500l178 53h7M540 591.500h12l129 20" stroke="#ffcc66" />
      <circle cx="654.500" cy="285" r="80.500" stroke="#ffff00" />
      <circle cx="654.500" cy="607.500" r="27" stroke="#ffff00" />
    </g>
    <g fill="#ffcc66">
      <path d="M577 262l9 1-1 4zM730 309l-8-4-1 3zM627 604l9-1v4zM681 611l-8-4-1 4z" />
      <path d="M933.500 286l3 7h-6zM933.500 607l3-7h-6zM1002.500 366l3 7h-6zM1002.500 473l3-7h-6z" />
    </g>
    <Marker y={285} />
    <Marker y={607} />
    <path d="M654.500 478v12" stroke="#8a5a34" strokeWidth="2" />
    <path d="M673 473l5 5m0-5l-5 5M651 494h4l-4 5h4M651 474l2 3m2-3l-3 5" stroke="#777b85" />
    <path d="M733 419.500h15" stroke="#e83a45" />
    <path d="M732.500 419v15" stroke="#2ff" />
    <circle cx="732.500" cy="419" r="3" fill="#2bee3a" />
    <circle cx="748.500" cy="419" r="2" fill="#e83a45" />
    <circle cx="732.500" cy="435" r="2" fill="#2ff" />
    <g fill="#996633" fontFamily="Lato, sans-serif" fontSize="10">
      <text x="895" y="201">TOP</text>
      <text x="570" y="474">FRONT</text>
      <text x="661" y="468">PRT_CSYS_DEF</text>
      <text x="655" y="637">RIGHT</text>
    </g>
    <g fill="#ffcc66" fontFamily="DejaVu Sans, sans-serif" fontSize="9">
      <text x="768" y="320">150.00</text>
      <text x="507" y="595">50.00</text>
      <text x="918" y="390">300.00</text>
      <text x="988" y="407">100.00</text>
    </g>
  </svg>
);

export default function App() {
  return (
    <Shell>
      <Global />
      <svg width="0" height="0" style={{ position: 'absolute' }} aria-hidden>
        <defs>
          <radialGradient id="ball" cx=".35" cy=".3" r=".7">
            <stop offset="0" stopColor="#e4e8ea" />
            <stop offset=".4" stopColor="#70777c" />
            <stop offset="1" stopColor="#15191c" />
          </radialGradient>
        </defs>
      </svg>
      <TitleBar>
        <Icon name="part" size={14} />
        <Title>PRT0001 (Active) - Creo Elements/Pro 5.0</Title>
        <WinButton aria-label="Minimize"><Glyph><path d="M5 15.500h7" stroke="#fff" strokeWidth="3" /></Glyph></WinButton>
        <WinButton aria-label="Maximize"><Glyph><path d="M5 5h10v10H5z" stroke="#fff" /><path d="M4.500 5.500h11" stroke="#fff" strokeWidth="3" /></Glyph></WinButton>
        <WinButton $close aria-label="Close"><Glyph><path d="M5 5l10 10M15 5L5 15" stroke="#fff" strokeWidth="2.500" /></Glyph></WinButton>
      </TitleBar>
      <MenuBar>
        {menus.map(([a, u, b]) => <MenuItem key={a + u + b} href="#">{a}<u>{u}</u>{b}</MenuItem>)}
      </MenuBar>
      <Toolbars>
        {rows.map((row, r) => (
          <ToolRow key={r}>
            {row.map((group, g) => (
              <Group key={g}>
                <Grip />
                {group.map(tool => <ToolItem key={tool.i} tool={tool} />)}
              </Group>
            ))}
          </ToolRow>
        ))}
      </Toolbars>
      <MessageBar>
        <Message>When a constraint is active, right click to cycle through lock/disable/enable the constraint. Use Tab key to toggle active constraint. Press and hold Shift to disable snapping to new constraints.</Message>
        <Thermo><Icon name="thermo" /></Thermo>
        <FilterWrap><Filter aria-label="Selection filter"><option>All</option></Filter></FilterWrap>
      </MessageBar>
      <Main>
        <LeftPane>
          <Navigator>
            <Tabs>
              <Tab $active aria-label="Model Tree"><Icon name="tabTree" /></Tab>
              <Tab aria-label="Folder Browser"><Icon name="tabFolders" /></Tab>
              <Tab aria-label="Favorites"><Icon name="tabFav" /></Tab>
            </Tabs>
            <Sheet>
              <SheetHead>
                <h2>Model Tree</h2>
                <Icon name="tools" />
                <ArrowButton aria-label="Settings" />
                <Cell $w={6} />
                <Icon name="list" />
                <ArrowButton aria-label="Show" />
              </SheetHead>
              <Tree>
                <TreeItem><Icon name="part" size={15} />PRT0001.PRT</TreeItem>
                {treeItems.map(([icon, label], n) => (
                  <TreeItem key={label} $child $last={n === treeItems.length - 1}>
                    <Icon name={icon} size={17} />
                    {icon === 'sketch' && (
                      <svg width="8" height="10" viewBox="0 0 8 10" aria-hidden>
                        <path d="M4 0v8M0 4h8M1 1l6 6M7 1L1 7" stroke="#6b6b30" />
                        <path d="M2 2h4v4H2z" fill="#ff0" />
                      </svg>
                    )}
                    {label}
                  </TreeItem>
                ))}
              </Tree>
            </Sheet>
          </Navigator>
          <Sash>
            <SashHandle aria-label="Collapse navigator" />
            <SashHandle $dark aria-label="Resize navigator" />
          </Sash>
        </LeftPane>
        <Viewport><Drawing /></Viewport>
        <RightPane>
          <SideGrip />
          <SideRow>
            <ToolButton $on aria-label="Select"><Icon name="arrow" /></ToolButton>
            <Cell $w={12} />
            <ToolButton aria-label="Graph"><Icon name="graphWave" /></ToolButton>
          </SideRow>
          <SideRow>
            <FlyButton $on $plain aria-label="Line"><Icon name="line" /></FlyButton>
            <SplitArrow><ArrowButton $side aria-label="Line options" /></SplitArrow>
            <Cell $w={1} />
            <ToolButton aria-label="Datum plane"><Icon name="plane" /></ToolButton>
          </SideRow>
          {side.map(s => (
            <SideRow key={s.a}>
              <ToolButton aria-label={s.a}><Icon name={s.a} /></ToolButton>
              {s.menu ? <ArrowButton $side $dim={s.menu === 'dim'} aria-label={`${s.a} options`} /> : <Cell $w={13} />}
              {s.b && <ToolButton aria-label={s.b}><Icon name={s.b} /></ToolButton>}
              {s.bMenu && <ArrowButton $side aria-label={`${s.b} options`} />}
            </SideRow>
          ))}
          <Flyout>
            <FlyButton aria-label="Line"><Icon name="line" /></FlyButton>
            <FlyButton aria-label="Line tangent"><Icon name="tangent" /></FlyButton>
            <FlyButton $on aria-label="Centerline"><Icon name="centre" /></FlyButton>
            <FlyButton aria-label="Geometry centerline"><Icon name="geocentre" /></FlyButton>
          </Flyout>
          <Tip role="tooltip">
            <h3><Icon name="centre" />Centerline</h3>
            <p>Create 2 point centerlines.</p>
          </Tip>
        </RightPane>
      </Main>
    </Shell>
  );
}
